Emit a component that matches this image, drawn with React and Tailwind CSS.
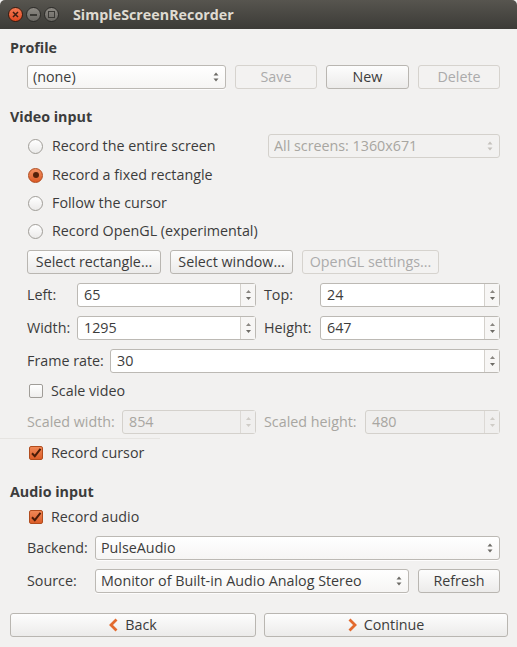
import React from "react";

const font = { fontFamily: '"Open Sans", "Noto Sans", sans-serif' };

const Arrows = ({ disabled }) => (
    <svg width="6" height="12" viewBox="0 0 6 12" className="shrink-0">
        <path d="M0.5 4.5 L3 1.5 L5.5 4.5 Z" fill={disabled ? "#c4c1bc" : "#6d6b66"} />
        <path d="M0.5 7.5 L3 10.5 L5.5 7.5 Z" fill={disabled ? "#c4c1bc" : "#6d6b66"} />
    </svg>
);

const Combo = ({ w, children, disabled }) => (
    <div
        className={`flex h-6 ${w} items-center justify-between rounded-[3px] border pl-[5px] pr-[6px] ${
            disabled
                ? "border-[#d4d1cc] bg-[#f2f1f0] text-[#a8a6a1]"
                : "border-[#bcb9b4] bg-gradient-to-b from-white to-[#f6f5f4] text-[#3c3c3c] shadow-[0_1px_0_rgba(255,255,255,0.8)]"
        }`}
    >
        <span className="truncate">{children}</span>
        <Arrows disabled={disabled} />
    </div>
);

const Btn = ({ w, children, disabled }) => (
    <div
        className={`flex h-6 ${w} items-center justify-center rounded-[3px] border ${
            disabled
                ? "border-[#d6d3ce] bg-[#f3f2f1] text-[#ababab]"
                : "border-[#b9b6b1] bg-gradient-to-b from-[#fdfdfd] to-[#ecebea] text-[#3c3c3c]"
        }`}
    >
        {children}
    </div>
);

const Spin = ({ w, value, disabled }) => (
    <div
        className={`flex h-6 ${w} rounded-[3px] border ${
            disabled ? "border-[#d4d1cc] bg-[#f0efee] text-[#a8a6a1]" : "border-[#bcb9b4] bg-white text-[#3c3c3c]"
        }`}
    >
        <div className="flex flex-1 items-center pl-[6px]">{value}</div>
        <div
            className={`flex w-[15px] flex-col items-center justify-between border-l py-[6px] ${
                disabled ? "border-[#dcd9d5] bg-[#f0efee]" : "border-[#d4d1cc] bg-[#f7f6f5]"
            }`}
        >
            <svg width="5" height="3" viewBox="0 0 5 3">
                <path d="M0 3 L2.5 0 L5 3 Z" fill={disabled ? "#cfccc7" : "#8a8782"} />
            </svg>
            <svg width="5" height="3" viewBox="0 0 5 3">
                <path d="M0 0 L2.5 3 L5 0 Z" fill={disabled ? "#cfccc7" : "#6d6b66"} />
            </svg>
        </div>
    </div>
);

const Radio = ({ checked, label }) => (
    <div className="flex h-6 items-center">
        <div className="flex w-[25px] justify-start pl-[1px]">
            {checked ? (
                <div className="flex h-[15px] w-[15px] items-center justify-center rounded-full border border-[#b04a1c] bg-gradient-to-b from-[#f39062] to-[#dc5a24]">
                    <div className="h-[6px] w-[6px] rounded-full bg-[#55210a]" />
                </div>
            ) : (
                <div className="h-[15px] w-[15px] rounded-full border border-[#a09d98] bg-gradient-to-b from-white to-[#ebeae9]" />
            )}
        </div>
        <span>{label}</span>
    </div>
);

const Check = ({ checked, label }) => (
    <div className="flex h-6 items-center">
        <div className="flex w-[24px] pl-[2px]">
            {checked ? (
                <div className="flex h-[14px] w-[14px] items-center justify-center rounded-[2px] border border-[#b24d1e] bg-gradient-to-b from-[#f08856] to-[#dc5d27]">
                    <svg width="12" height="12" viewBox="0 0 12 12">
                        <path d="M2 6.2 L4.8 9.2 L10.5 1.8" fill="none" stroke="#4a1c08" strokeWidth="2" />
                    </svg>
                </div>
            ) : (
                <div className="h-[14px] w-[14px] rounded-[2px] border border-[#a09d98] bg-gradient-to-b from-white to-[#efeeed]" />
            )}
        </div>
        <span>{label}</span>
    </div>
);

const Chevron = ({ left }) => (
    <svg width="9" height="14" viewBox="0 0 9 14" className="mr-[7px]">
        <path
            d={left ? "M7.5 1.5 L2 7 L7.5 12.5" : "M1.5 1.5 L7 7 L1.5 12.5"}
            fill="none"
            stroke="#e36a2e"
            strokeWidth="2.8"
        />
    </svg>
);

const WinBtn = ({ kind }) => {
    if (kind === "close") {
        return (
            <div className="flex h-[15px] w-[15px] items-center justify-center rounded-full border border-[#3a1a0e] bg-gradient-to-b from-[#f47a53] to-[#e0471e]">
                <svg width="7" height="7" viewBox="0 0 7 7">
                    <path d="M1 1 L6 6 M6 1 L1 6" stroke="#3b1d12" strokeWidth="1.5" />
                </svg>
            </div>
        );
    }
    return (
        <div className="flex h-[15px] w-[15px] items-center justify-center rounded-full border border-[#2c2b28] bg-gradient-to-b from-[#8d8a84] to-[#6a6863]">
            {kind === "min" ? (
                <div className="h-[2px] w-[7px] bg-[#3a3935]" />
            ) : (
                <div className="h-[7px] w-[7px] border-[1.5px] border-[#3a3935]" />
            )}
        </div>
    );
};

export default function App() {
    return (
        <div className="flex h-[647px] w-[517px] flex-col overflow-hidden bg-[#f2f1f0] text-[14.3px] text-[#3c3c3c]" style={font}>
            {/* title bar */}
            <div className="flex h-[29px] shrink-0 items-center rounded-t-[5px] bg-gradient-to-b from-[#57554f] to-[#3c3b37] pl-[8px]">
                <div className="flex gap-[3px]">
                    <WinBtn kind="close" />
                    <WinBtn kind="min" />
                    <WinBtn kind="max" />
                </div>
                <span className="ml-[14px] font-bold text-[#dfdbd2]">SimpleScreenRecorder</span>
            </div>

            <div className="flex flex-col pl-[10px] pr-[17px]">
                <div className="mt-[9px] h-5 font-bold leading-5">Profile</div>
                <div className="ml-[17px] mt-[7px] flex gap-[9px]">
                    <Combo w="w-[199px]">(none)</Combo>
                    <Btn w="w-[82px]" disabled>Save</Btn>
                    <Btn w="w-[83px]">New</Btn>
                    <Btn w="w-[82px]" disabled>Delete</Btn>
                </div>

                <div className="mt-[18px] h-5 font-bold leading-5">Video input</div>
                <div className="ml-[17px] flex flex-col">
                    <div className="mt-[7px] flex items-center justify-between">
                        <Radio label="Record the entire screen" />
                        <Combo w="w-[232px]" disabled>All screens: 1360x671</Combo>
                    </div>
                    <div className="mt-[5px]">
                        <Radio checked label="Record a fixed rectangle" />
                    </div>
                    <div className="mt-[4px]">
                        <Radio label="Follow the cursor" />
                    </div>
                    <div className="mt-[4px]">
                        <Radio label="Record OpenGL (experimental)" />
                    </div>
                    <div className="mt-[7px] flex gap-[9px]">
                        <Btn w="w-[134px]">Select rectangle...</Btn>
                        <Btn w="w-[123px]">Select window...</Btn>
                        <Btn w="w-[137px]" disabled>OpenGL settings...</Btn>
                    </div>
                    <div className="mt-[9px] flex items-center">
                        <span className="w-[50px]">Left:</span>
                        <Spin w="w-[179px]" value="65" />
                        <span className="ml-[8px] w-[56px]">Top:</span>
                        <Spin w="w-[180px]" value="24" />
                    </div>
                    <div className="mt-[9px] flex items-center">
                        <span className="w-[50px]">Width:</span>
                        <Spin w="w-[179px]" value="1295" />
                        <span className="ml-[8px] w-[56px]">Height:</span>
                        <Spin w="w-[180px]" value="647" />
                    </div>
                    <div className="mt-[9px] flex items-center">
                        <span className="w-[83px]">Frame rate:</span>
                        <Spin w="w-[390px]" value="30" />
                    </div>
                    <div className="mt-[6px]">
                        <Check label="Scale video" />
                    </div>
                    <div className="mt-[7px] flex items-center text-[#a8a6a1]">
                        <span className="w-[95px]">Scaled width:</span>
                        <Spin w="w-[134px]" value="854" disabled />
                        <span className="ml-[8px] w-[101px]">Scaled height:</span>
                        <Spin w="w-[135px]" value="480" disabled />
                    </div>
                </div>
            </div>

            <div className="mt-[4px] h-px w-[160px] bg-[#e6e4e1]" />

            <div className="flex flex-col pl-[10px] pr-[17px]">
                <div className="ml-[17px] mt-[2px]">
                    <Check checked label="Record cursor" />
                </div>

                <div className="mt-[17px] h-5 font-bold leading-5">Audio input</div>
                <div className="ml-[17px] flex flex-col">
                    <div className="mt-[3px]">
                        <Check checked label="Record audio" />
                    </div>
                    <div className="mt-[7px] flex items-center">
                        <span className="w-[68px]">Backend:</span>
                        <Combo w="w-[405px]">PulseAudio</Combo>
                    </div>
                    <div className="mt-[9px] flex items-center">
                        <span className="w-[68px]">Source:</span>
                        <Combo w="w-[314px]">Monitor of Built-in Audio Analog Stereo</Combo>
                        <div className="ml-[9px]">
                            <Btn w="w-[82px]">Refresh</Btn>
                        </div>
                    </div>
                </div>
            </div>

            <div className="mt-[20px] flex gap-[8px] pl-[10px]">
                <Btn w="w-[246px]">
                    <Chevron left />
                    Back
                </Btn>
                <Btn w="w-[244px]">
                    <Chevron />
                    Continue
                </Btn>
            </div>
        </div>
    );
}
